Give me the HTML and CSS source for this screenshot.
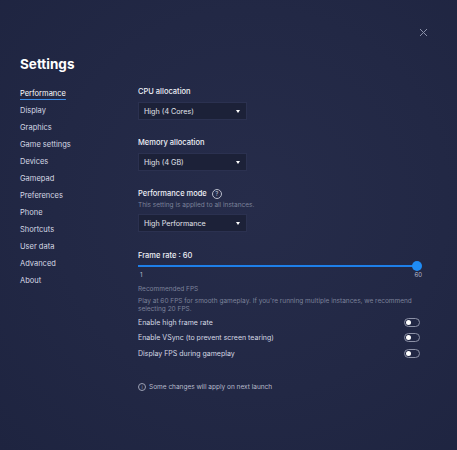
FILE: index.html
```html
<!DOCTYPE html>
<html>
<head>
  <title>Settings</title>
  <link rel="stylesheet" href="styles.css">
</head>
<body>

  <div class="window">
    <!-- close button -->
    <button class="close-btn" aria-label="Close">
      <svg width="9" height="9" viewBox="0 0 9 9">
        <path d="M1 1 L8 8 M8 1 L1 8" stroke="#8a90a8" stroke-width="1" fill="none"/>
      </svg>
    </button>

    <h1 class="title">Settings</h1>

    <div class="layout">
      <!-- Sidebar -->
      <nav class="sidebar">
        <a href="#" class="active">Performance</a>
        <a href="#">Display</a>
        <a href="#">Graphics</a>
        <a href="#">Game settings</a>
        <a href="#">Devices</a>
        <a href="#">Gamepad</a>
        <a href="#">Preferences</a>
        <a href="#">Phone</a>
        <a href="#">Shortcuts</a>
        <a href="#">User data</a>
        <a href="#">Advanced</a>
        <a href="#">About</a>
      </nav>

      <!-- Performance panel -->
      <div class="panel">
        <div class="field">
          <div class="label">CPU allocation</div>
          <div class="select">
            <span>High (4 Cores)</span>
            <span class="caret"></span>
          </div>
        </div>

        <div class="field">
          <div class="label">Memory allocation</div>
          <div class="select">
            <span>High (4 GB)</span>
            <span class="caret"></span>
          </div>
        </div>

        <div class="field mode">
          <div class="label">
            Performance mode
            <span class="help">?</span>
          </div>
          <div class="hint">This setting is applied to all instances.</div>
          <div class="select">
            <span>High Performance</span>
            <span class="caret"></span>
          </div>
        </div>

        <div class="field frame">
          <div class="label">Frame rate : 60</div>
          <div class="slider">
            <div class="track"></div>
            <div class="thumb"></div>
          </div>
          <div class="slider-range">
            <span>1</span>
            <span>60</span>
          </div>
        </div>

        <div class="note">
          <div>Recommended FPS</div>
          <div>Play at 60 FPS for smooth gameplay. If you're running multiple instances, we recommend selecting 20 FPS.</div>
        </div>

        <div class="toggles">
          <div class="toggle-row">
            <span>Enable high frame rate</span>
            <span class="toggle"></span>
          </div>
          <div class="toggle-row">
            <span>Enable VSync (to prevent screen tearing)</span>
            <span class="toggle"></span>
          </div>
          <div class="toggle-row">
            <span>Display FPS during gameplay</span>
            <span class="toggle"></span>
          </div>
        </div>

        <div class="footer-note">
          <span class="info">i</span>
          Some changes will apply on next launch
        </div>
      </div>
    </div>
  </div>

</body>
</html>
```

FILE: styles.css
```css
body {
  margin: 0;
  padding: 0;
  font-family: Inter, "Noto Sans", sans-serif;
  background: radial-gradient(ellipse at 55% 45%, #262c4a 0%, #222845 55%, #1e2440 100%);
  color: #e4e6ee;
  width: 457px;
  height: 450px;
  overflow: hidden;
}

.window {
  position: relative;
  padding: 56px 20px 0 20px;
}

.close-btn {
  position: absolute;
  top: 28px;
  right: 29px;
  background: none;
  border: none;
  padding: 0;
  width: 9px;
  height: 9px;
  cursor: pointer;
}

.close-btn svg {
  display: block;
}

.title {
  margin: 0;
  font-size: 13.5px;
  font-weight: 700;
  color: #ffffff;
  line-height: 16px;
}

.layout {
  display: flex;
  align-items: flex-start;
  margin-top: 14px;
}

/* Sidebar */
.sidebar {
  width: 118px;
  display: flex;
  flex-direction: column;
  margin-top: -1px;
}

.sidebar a {
  color: #d6d9e4;
  text-decoration: none;
  font-size: 7.5px;
  line-height: 17px;
  align-self: flex-start;
}

.sidebar a.active {
  color: #ffffff;
  text-decoration: underline;
  text-decoration-color: #3d8de6;
  text-underline-offset: 3px;
}

/* Panel */
.panel {
  width: 280px;
  display: flex;
  flex-direction: column;
}

.field {
  margin-bottom: 17px;
}

.field.mode {
  margin-top: 0;
}

.label {
  font-size: 7.5px;
  font-weight: 500;
  color: #eef0f6;
  line-height: 12px;
  display: flex;
  align-items: center;
  gap: 5px;
}

.help {
  width: 8px;
  height: 8px;
  border: 1px solid #b8bccb;
  border-radius: 50%;
  font-size: 6px;
  line-height: 8px;
  text-align: center;
  color: #b8bccb;
}

.hint {
  font-size: 6.5px;
  color: #7c829a;
  line-height: 10px;
  margin-bottom: 0;
}

.select {
  margin-top: 4px;
  width: 109px;
  height: 18px;
  box-sizing: border-box;
  padding: 0 6px 0 5px;
  background-color: #1c2138;
  border: 1px solid #2b3150;
  display: flex;
  align-items: center;
  justify-content: space-between;
  font-size: 7.2px;
  color: #e2e4ec;
}

.caret {
  width: 0;
  height: 0;
  border-left: 2.5px solid transparent;
  border-right: 2.5px solid transparent;
  border-top: 3px solid #ffffff;
}

/* Frame rate slider */
.frame {
  margin-top: 1px;
  margin-bottom: 6px;
}

.slider {
  position: relative;
  height: 10px;
  margin-top: -1px;
}

.track {
  position: absolute;
  left: 0;
  right: 0;
  top: 4px;
  height: 2px;
  background-color: #1e7fe8;
}

.thumb {
  position: absolute;
  right: -4px;
  top: 0;
  width: 10px;
  height: 10px;
  border-radius: 50%;
  background-color: #1f8cf5;
}

.slider-range {
  display: flex;
  justify-content: space-between;
  font-size: 6px;
  color: #b8bccb;
  line-height: 8px;
  padding: 0 0 0 2px;
  margin-right: -4px;
}

.note {
  font-size: 6.5px;
  color: #7c829a;
  line-height: 8.5px;
  padding-right: 2px;
}

.note div:first-child {
  margin-bottom: 3px;
}

.toggles {
  margin-top: 1px;
  display: flex;
  flex-direction: column;
}

.toggle-row {
  display: flex;
  justify-content: space-between;
  align-items: center;
  height: 15.5px;
  font-size: 7px;
  color: #d6d9e4;
}

.toggle {
  width: 14px;
  height: 7px;
  border: 1px solid #8c91a6;
  border-radius: 5px;
  position: relative;
  margin-right: -2px;
}

.toggle::after {
  content: "";
  position: absolute;
  left: 1px;
  top: 1px;
  width: 5px;
  height: 5px;
  border-radius: 50%;
  background-color: #ffffff;
}

.footer-note {
  margin-top: 22px;
  display: flex;
  align-items: center;
  gap: 3px;
  font-size: 6.5px;
  color: #b8bccb;
}

.info {
  width: 6px;
  height: 6px;
  border: 1px solid #9ca1b4;
  border-radius: 50%;
  font-size: 5px;
  line-height: 6px;
  text-align: center;
  color: #9ca1b4;
}
```
